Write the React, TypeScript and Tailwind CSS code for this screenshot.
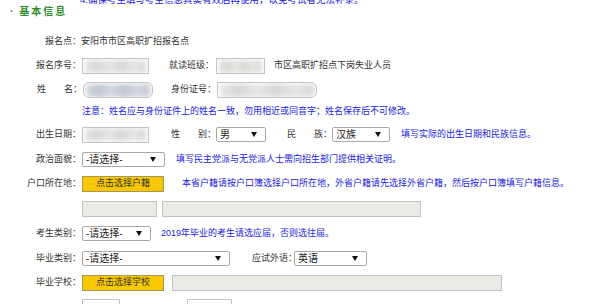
import React from "react";

const Blue = ({ children, className = "" }: { children: React.ReactNode; className?: string }) => (
  <span className={`text-[#2121e0] whitespace-nowrap ${className}`}>{children}</span>
);

const Label = ({ children }: { children: React.ReactNode }) => (
  <div className="w-[81px] shrink-0 flex justify-end whitespace-nowrap text-[#333]">{children}</div>
);

const Text = ({ children, className = "" }: { children: React.ReactNode; className?: string }) => (
  <span className={`shrink-0 whitespace-nowrap text-[#333] ${className}`}>{children}</span>
);

const Spaced = ({ a, b, className = "" }: { a: string; b: string; className?: string }) => (
  <div className={`w-[45px] shrink-0 flex justify-between whitespace-nowrap text-[#333] ${className}`}>
    <span>{a}</span>
    <span>{b}：</span>
  </div>
);

const Tri = () => (
  <svg width="6" height="5" viewBox="0 0 6 5" className="shrink-0">
    <path d="M0 0 H6 L3 5 Z" fill="#111" />
  </svg>
);

const Select = ({ text, w, className = "" }: { text: string; w: string; className?: string }) => (
  <div
    className={`${w} h-[15px] shrink-0 flex items-center justify-between border border-[#a9a9a9] rounded-[2px] bg-white pl-[3px] pr-[8px] text-[#222] text-[10px] ${className}`}
  >
    <span className="leading-none">{text}</span>
    <Tri />
  </div>
);

const Blurred = ({
  w,
  tone = "#d6d6d4",
  tone2 = "#e6e6e4",
  className = "",
}: {
  w: string;
  tone?: string;
  tone2?: string;
  className?: string;
}) => (
  <div className={`${w} h-[16px] shrink-0 border border-[#c4c4c4] bg-white overflow-hidden flex items-center px-[2px] ${className}`}>
    <div
      className="h-[13px] w-full blur-[2.5px]"
      style={{ background: `linear-gradient(90deg, ${tone2} 0%, ${tone} 20%, ${tone2} 40%, ${tone} 60%, ${tone2} 80%, ${tone} 100%)` }}
    />
  </div>
);

const YellowBtn = ({ text }: { text: string }) => (
  <div className="w-[82px] h-[16px] shrink-0 flex items-center justify-center bg-[#f7c700] border border-[#a8955a] text-[#333]">
    {text}
  </div>
);

const Grey = ({ w, className = "" }: { w: string; className?: string }) => (
  <div className={`${w} h-[16px] shrink-0 bg-[#ebebe5] border border-[#c2c2c2] ${className}`} />
);

const Row = ({ h = "h-[24px]", children }: { h?: string; children: React.ReactNode }) => (
  <div className={`${h} flex items-center`}>{children}</div>
);

export default function App() {
  return (
    <div className="w-[600px] h-[304px] overflow-hidden bg-white text-[9px] font-['Liberation_Sans','Noto_Sans_CJK_SC',sans-serif]">
      <div className="pl-[80px] -mt-[6px] leading-[12px] h-[12px] text-[9.5px]">
        <Blue>4.确保考生填写考生信息真实有效后再使用，以免考试者无法补录。</Blue>
      </div>
      <div className="h-[12px] leading-[12px] pl-[10px] flex items-center text-[#2f8a2a] font-bold text-[10px]">
        <span className="mr-[6px]">·</span>
        <span className="tracking-[2px]">基本信息</span>
      </div>

      <div className="mt-[12px]">
        <Row>
          <Label>报名点：</Label>
          <Text>安阳市市区高职扩招报名点</Text>
        </Row>

        <Row>
          <Label>报名序号：</Label>
          <div className="w-[88px] shrink-0 pl-px">
            <Blurred w="w-[67px]" />
          </div>
          <Text className="w-[47px]">就读班级：</Text>
          <Blurred w="w-[49px]" tone="#d8d6d2" />
          <Text className="ml-[9px]">市区高职扩招点下岗失业人员</Text>
        </Row>

        <Row>
          <div className="w-[37px] shrink-0" />
          <Spaced a="姓" b="名" />
          <div className="w-[89px] shrink-0 pl-px">
            <Blurred w="w-[70px]" tone="#bfc5cf" tone2="#d3d7de" className="rounded-[6px]" />
          </div>
          <Text className="w-[46px]">身份证号：</Text>
          <Blurred w="w-[100px]" tone="#d6d6d4" className="rounded-r-[6px]" />
        </Row>

        <Row h="h-[20px]">
          <div className="w-[82px] shrink-0" />
          <Blue>注意：姓名应与身份证件上的姓名一致，勿用相近或同音字；姓名保存后不可修改。</Blue>
        </Row>

        <Row h="h-[25px]">
          <Label>出生日期：</Label>
          <div className="w-[90px] shrink-0 pl-px">
            <Blurred w="w-[67px]" tone="#d6d6d6" />
          </div>
          <Spaced a="性" b="别" />
          <Select text="男" w="w-[50px]" />
          <div className="w-[21px] shrink-0" />
          <Spaced a="民" b="族" />
          <Select text="汉族" w="w-[58px]" />
          <Blue className="ml-[11px]">填写实际的出生日期和民族信息。</Blue>
        </Row>

        <Row h="h-[25px]">
          <Label>政治面貌：</Label>
          <Select text="-请选择-" w="w-[83px]" className="ml-px" />
          <Blue className="ml-[11px]">填写民主党派与无党派人士需向招生部门提供相关证明。</Blue>
        </Row>

        <Row>
          <Label>户口所在地：</Label>
          <div className="ml-px">
            <YellowBtn text="点击选择户籍" />
          </div>
          <Blue className="ml-[18px]">本省户籍请按户口簿选择户口所在地，外省户籍请先选择外省户籍，然后按户口簿填写户籍信息。</Blue>
        </Row>

        <Row h="h-[25px]">
          <div className="w-[82px] shrink-0" />
          <Grey w="w-[75px]" />
          <Grey w="w-[259px]" className="ml-[5px]" />
        </Row>

        <Row h="h-[25px]">
          <Label>考生类别：</Label>
          <Select text="-请选择-" w="w-[69px]" className="ml-px" />
          <Blue className="ml-[10px]">2019年毕业的考生请选应届，否则选往届。</Blue>
        </Row>

        <Row h="h-[25px]">
          <Label>毕业类别：</Label>
          <Select text="-请选择-" w="w-[148px]" className="ml-px" />
          <Text className="ml-[22px] w-[42px]">应试外语：</Text>
          <Select text="英语" w="w-[73px]" />
        </Row>

        <Row>
          <Label>毕业学校：</Label>
          <div className="ml-px">
            <YellowBtn text="点击选择学校" />
          </div>
          <Grey w="w-[330px]" className="ml-[8px]" />
        </Row>

        <Row>
          <div className="w-[82px] shrink-0" />
          <div className="w-[38px] h-[16px] shrink-0 border border-[#c4c4c4] bg-white" />
          <div className="w-[45px] h-[16px] shrink-0 border border-[#c4c4c4] bg-white ml-[67px]" />
        </Row>
      </div>
    </div>
  );
}
